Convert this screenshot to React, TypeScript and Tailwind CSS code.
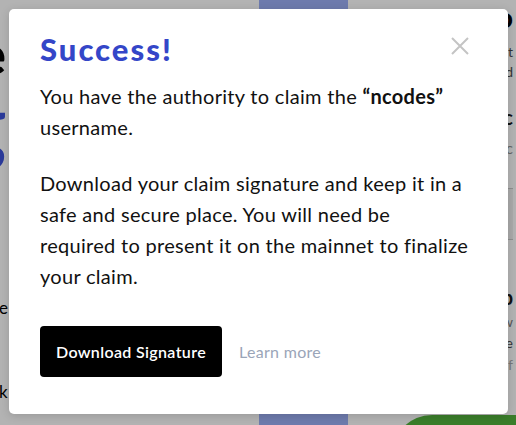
import React from 'react';

const font = { fontFamily: 'Lato, "Noto Sans", sans-serif' };

function CloseIcon() {
  return (
    <svg width="20" height="20" viewBox="0 0 20 20" fill="none">
      <path d="M2 2L18 18M18 2L2 18" stroke="#c4c4c4" strokeWidth="2" />
    </svg>
  );
}

function PageBehind() {
  return (
    <div className="flex h-full w-full bg-[#b3b3b3]">
      {/* left column, mostly hidden behind the dialog */}
      <div className="flex w-[259px] flex-col overflow-hidden">
        <div className="mt-[26px] -ml-[24px] text-[56px] font-black leading-[56px] text-black">e</div>
        <div className="-ml-[40px] text-[88px] font-bold leading-[80px] text-[#2b3a9a]">g</div>
        <div className="-ml-[1px] mt-[134px] text-[17px] leading-[24px] text-black">e</div>
        <div className="-ml-[1px] mt-[60px] text-[17px] leading-[24px] text-black">k</div>
      </div>
      <div className="w-[89px] bg-[#6e7bad]" />
      <div className="relative flex flex-1 flex-col items-end overflow-hidden pr-[3px] text-right">
        <div className="mt-[2px] text-[28px] font-black leading-[30px] text-black">o</div>
        <div className="mt-[10px] text-[14px] leading-[20px] text-[#333]">t</div>
        <div className="text-[14px] leading-[20px] text-[#333]">d</div>
        <div className="mt-[22px] text-[20px] font-bold leading-[26px] text-[#111]">c</div>
        <div className="mt-[8px] text-[15px] leading-[20px] text-[#666]">rc</div>
        <div className="mt-[30px] flex h-[52px] w-[20px] items-center border-y border-[#8e8e8e] bg-[#a9a9a9] text-[15px] text-[#6c7280]">th</div>
        <div className="mt-[44px] text-[20px] font-bold leading-[26px] text-[#111]">p</div>
        <div className="mt-[2px] text-[14px] leading-[20px] text-[#555]">ow</div>
        <div className="text-[14px] leading-[22px] text-[#333]">re</div>
        <div className="text-[14px] leading-[22px] text-[#777]">r f</div>
        <div className="absolute -bottom-[40px] left-[44px] h-[50px] w-[200px] rounded-tl-[40px] bg-[#3a7d2a]" />
      </div>
    </div>
  );
}

export default function App() {
  return (
    <div className="relative h-[425px] w-[516px] overflow-hidden" style={font}>
      <PageBehind />

      <div className="absolute left-[9px] top-[9px] flex h-[405px] w-[499px] flex-col rounded-[5px] bg-white px-[31px] pt-[22px] shadow-[0_2px_10px_rgba(0,0,0,0.15)]">
        <button className="absolute right-[38px] top-[27px]" aria-label="Close">
          <CloseIcon />
        </button>

        <h2 className="text-[31px] font-black leading-[36px] tracking-[2px] text-[#3446c8]">Success!</h2>

        <div className="mt-[14px] text-[20px] leading-[31px] tracking-[0.3px] whitespace-nowrap text-[#111]">
          <p>
            You have the authority to claim the <span className="font-bold">“ncodes”</span>
            <br />
            username.
          </p>
          <p className="mt-[25px]">
            Download your claim signature and keep it in a
            <br />
            safe and secure place. You will need be
            <br />
            required to present it on the mainnet to finalize
            <br />
            your claim.
          </p>
        </div>

        <div className="mt-[34px] flex items-center gap-[17px]">
          <button className="flex h-[51px] w-[182px] items-center justify-center rounded-[4px] bg-black text-[16px] font-semibold tracking-[0.35px] text-white">
            Download Signature
          </button>
          <a className="text-[16px] tracking-[0.3px] text-[#9aa5b8]" href="#">Learn more</a>
        </div>
      </div>
    </div>
  );
}
